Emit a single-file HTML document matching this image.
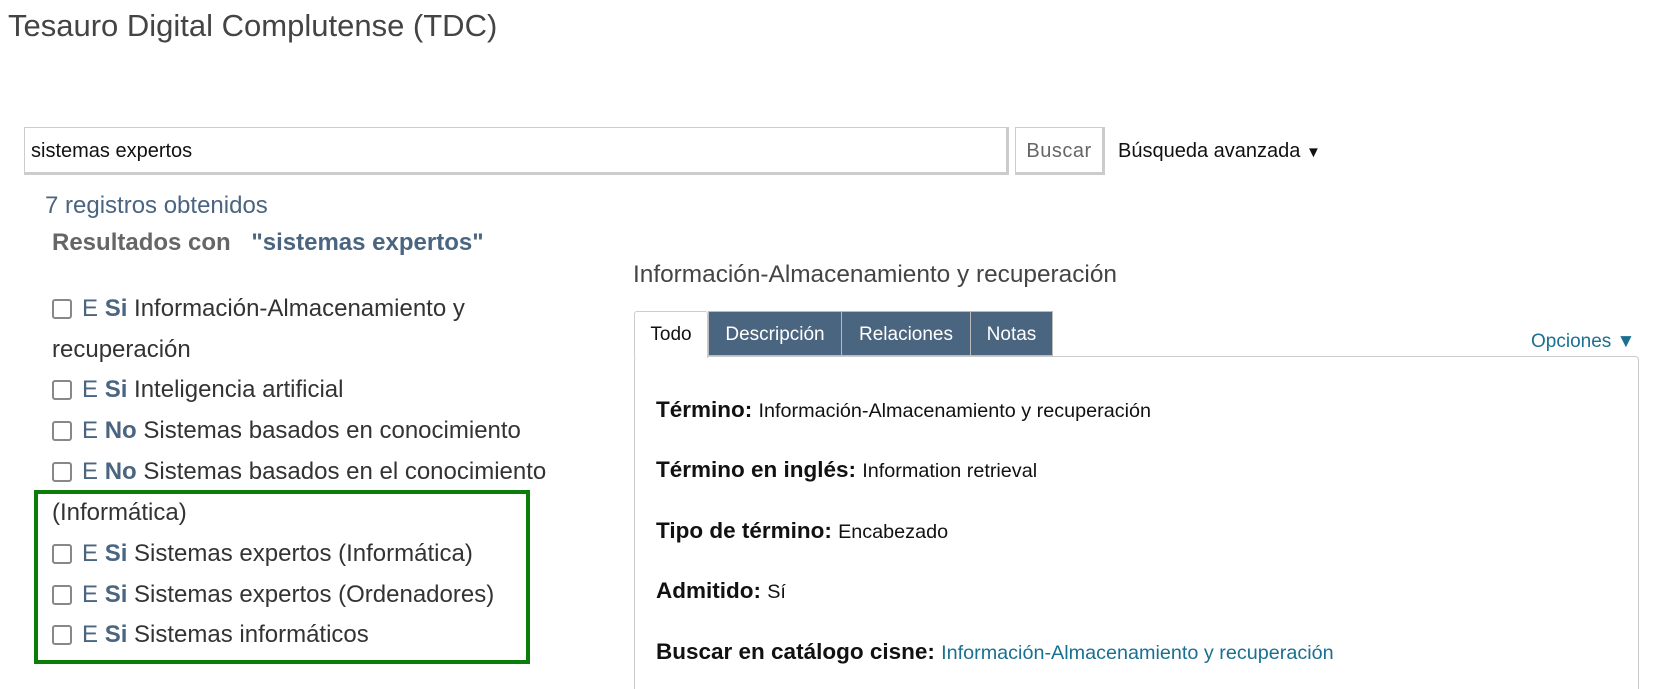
<!DOCTYPE html>
<html style="overflow:hidden;height:689px"><head><meta charset="utf-8"><style>
body{margin:0;width:1655px;height:689px;background:#fff;font-family:"Liberation Sans",sans-serif;position:relative;overflow:hidden}
.a{position:absolute;white-space:nowrap}
.cb{display:inline-block;width:20px;height:20px;border:2px solid #888;border-radius:3px;box-sizing:border-box;vertical-align:-3px;margin-right:10px;background:#fff}
.item{position:absolute;left:52px;font-size:24px;color:#333;white-space:nowrap}
.e{color:#4a6580}.s{color:#4a6580;font-weight:bold}
.tab{position:absolute;top:311px;height:45px;background:#4a6580;color:#fff;font-size:19px;line-height:45px;text-align:center;border:1px solid #bbb;box-sizing:border-box}
.lbl{position:absolute;left:656px;font-size:22.5px;font-weight:bold;color:#111;white-space:nowrap}
.lbl span{font-weight:normal;font-size:19.8px}
</style></head><body>
<div class="a" style="left:8px;top:8px;font-size:31px;color:#444">Tesauro Digital Complutense (TDC)</div>
<div class="a" style="left:24px;top:127px;width:985px;height:48px;border:1px solid #ccc;border-bottom:3px solid #ccc;border-right:3px solid #ccc;box-sizing:border-box;font-size:20px;line-height:46px;padding-left:6px;color:#111">sistemas expertos</div>
<div class="a" style="left:1015px;top:127px;width:90px;height:48px;border:1px solid #ccc;border-bottom:3px solid #ccc;border-right:3px solid #ccc;box-sizing:border-box;font-size:20px;line-height:46px;text-align:center;color:#666;background:#fff;letter-spacing:0.5px">Buscar</div>
<div class="a" style="left:1118px;top:140px;font-size:20px;color:#111">Búsqueda avanzada <span style="font-size:15px">▼</span></div>
<div class="a" style="left:45px;top:192px;font-size:24px;color:#4a6580">7 registros obtenidos</div>
<div class="a" style="left:52px;top:229px;font-size:24px;font-weight:bold;color:#666">Resultados con <span style="color:#4a6580;margin-left:14px">"sistemas expertos"</span></div>
<div class="item" style="top:295px"><span class="cb"></span><span class="e">E</span> <span class="s">Si</span> Información-Almacenamiento y</div>
<div class="item" style="top:336px">recuperación</div>
<div class="item" style="top:376px"><span class="cb"></span><span class="e">E</span> <span class="s">Si</span> Inteligencia artificial</div>
<div class="item" style="top:417px"><span class="cb"></span><span class="e">E</span> <span class="s">No</span> Sistemas basados en conocimiento</div>
<div class="item" style="top:458px"><span class="cb"></span><span class="e">E</span> <span class="s">No</span> Sistemas basados en el conocimiento</div>
<div class="item" style="top:499px">(Informática)</div>
<div class="item" style="top:540px"><span class="cb"></span><span class="e">E</span> <span class="s">Si</span> Sistemas expertos (Informática)</div>
<div class="item" style="top:581px"><span class="cb"></span><span class="e">E</span> <span class="s">Si</span> Sistemas expertos (Ordenadores)</div>
<div class="item" style="top:621px"><span class="cb"></span><span class="e">E</span> <span class="s">Si</span> Sistemas informáticos</div>
<div class="a" style="left:34px;top:490px;width:496px;height:174px;border:4px solid #0a7d0a;box-sizing:border-box"></div>
<div class="a" style="left:633px;top:261px;font-size:24.4px;color:#444">Información-Almacenamiento y recuperación</div>
<div class="a" style="left:634px;top:356px;width:1005px;height:340px;border:1px solid #ccc;border-radius:4px;box-sizing:border-box"></div>
<div class="a" style="left:634px;top:311px;width:74px;height:47px;border:1px solid #ccc;border-bottom:none;background:#fff;box-sizing:border-box;font-size:19px;line-height:45px;text-align:center;color:#111;border-radius:3px 3px 0 0">Todo</div>
<div class="tab" style="left:708px;width:134px">Descripción</div>
<div class="tab" style="left:841px;width:130px">Relaciones</div>
<div class="tab" style="left:970px;width:83px">Notas</div>
<div class="a" style="left:1531px;top:331px;font-size:19px;color:#1a7090">Opciones ▼</div>
<div class="lbl" style="top:397px">Término: <span>Información-Almacenamiento y recuperación</span></div>
<div class="lbl" style="top:457px">Término en inglés: <span>Information retrieval</span></div>
<div class="lbl" style="top:518px">Tipo de término: <span>Encabezado</span></div>
<div class="lbl" style="top:578px">Admitido: <span>Sí</span></div>
<div class="lbl" style="top:639px">Buscar en catálogo cisne: <span style="color:#1a7090">Información-Almacenamiento y recuperación</span></div>
</body></html>
